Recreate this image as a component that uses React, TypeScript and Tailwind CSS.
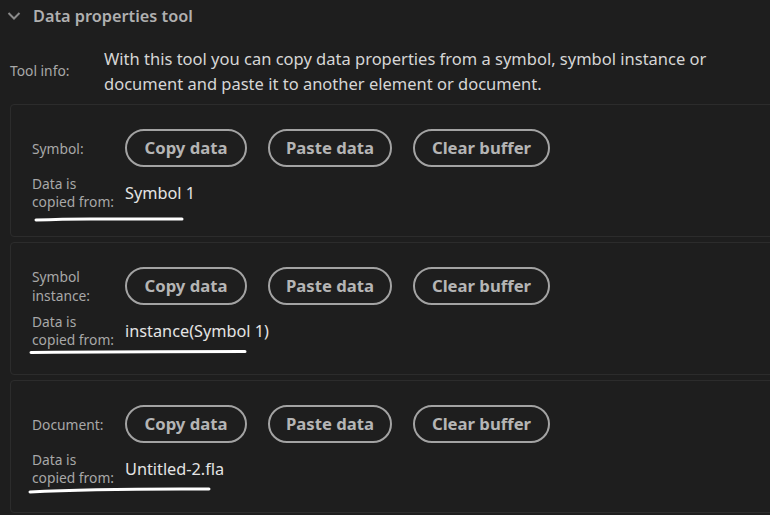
import React from "react";

type Row = { label: string[]; value: string };

const rows: Row[] = [
  { label: ["Symbol:"], value: "Symbol 1" },
  { label: ["Symbol", "instance:"], value: "instance(Symbol 1)" },
  { label: ["Document:"], value: "Untitled-2.fla" },
];

function Btn({ children, w }: { children: React.ReactNode; w: string }) {
  return (
    <button
      className={`${w} h-[38px] shrink-0 rounded-full border-2 border-[#a3a3a3] text-[16.7px] font-bold text-[#b5b5b5] flex items-center justify-center`}
    >
      {children}
    </button>
  );
}

function Card({ row }: { row: Row }) {
  return (
    <div className="w-[790px] h-[133px] shrink-0 rounded-[4px] border border-[#2c2c2c] pt-[24px] pl-[21px]">
      <div className="flex items-center h-[38px]">
        <div className="w-[93px] text-[13.8px] leading-[19px] text-[#a8a8a8]">
          {row.label.map((l) => (
            <div key={l}>{l}</div>
          ))}
        </div>
        <div className="flex gap-[21px]">
          <Btn w="w-[122px]">Copy data</Btn>
          <Btn w="w-[124px]">Paste data</Btn>
          <Btn w="w-[137px]">Clear buffer</Btn>
        </div>
      </div>
      <div className="flex items-center mt-[8px]">
        <div className="w-[93px] text-[13.8px] leading-[18px] text-[#a8a8a8]">
          <div>Data is</div>
          <div>copied from:</div>
        </div>
        <div className="text-[16.3px] text-[#e4e4e4]">{row.value}</div>
      </div>
    </div>
  );
}

export default function App() {
  return (
    <div className="relative w-[770px] h-[515px] overflow-hidden bg-[#1e1e1e] font-['Noto_Sans',sans-serif]">
      <div className="flex items-center h-[32px] pl-[7px]">
        <svg width="14" height="10" viewBox="0 0 14 10" className="mr-[12px]">
          <path d="M1.5 2 L7 7.5 L12.5 2" fill="none" stroke="#8a8a8a" strokeWidth="2" />
        </svg>
        <span className="text-[16.3px] font-semibold text-[#b0b0b0]">Data properties tool</span>
      </div>
      <div className="flex items-center mt-[14px] pl-[10px]">
        <div className="w-[94px] shrink-0 text-[13.8px] text-[#a8a8a8]">Tool info:</div>
        <p className="text-[16.5px] leading-[25px] text-[#d6d6d6] w-[650px]">
          With this tool you can copy data properties from a symbol, symbol instance or document and paste it to another element or document.
        </p>
      </div>
      <div className="flex flex-col gap-[5px] mt-[8px] pl-[10px]">
        {rows.map((r) => (
          <Card key={r.value} row={r} />
        ))}
      </div>
      <svg className="absolute left-0 top-0 pointer-events-none" width="770" height="515">
        <path d="M36 220 Q 70 218.5 110 219 L182 219" fill="none" stroke="#fff" strokeWidth="3" strokeLinecap="round" />
        <path d="M31 352.5 Q 120 351.5 245 351.5" fill="none" stroke="#fff" strokeWidth="3" strokeLinecap="round" />
        <path d="M30 492 Q 95 488.5 209 489" fill="none" stroke="#fff" strokeWidth="3" strokeLinecap="round" />
      </svg>
    </div>
  );
}
